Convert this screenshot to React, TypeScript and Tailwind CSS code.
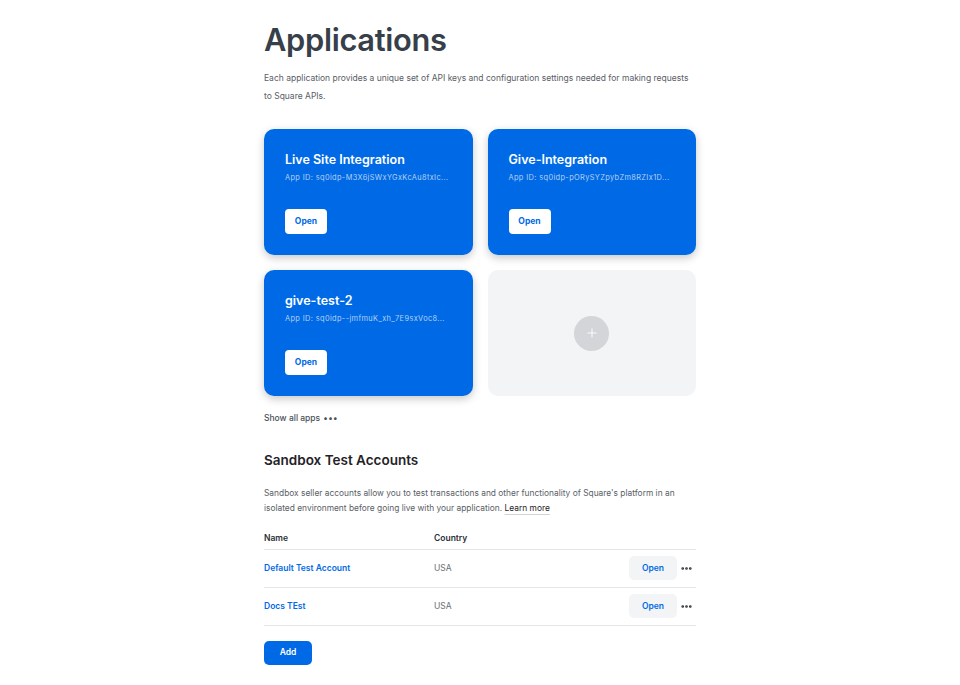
import { Plus, MoreHorizontal } from 'lucide-react';

type App = { name: string; appId: string };

const apps: App[] = [
  { name: 'Live Site Integration', appId: 'sq0idp-M3X6jSWxYGxKcAu8txIc...' },
  { name: 'Give-Integration', appId: 'sq0idp-pORySYZpybZm8RZIx1D...' },
  { name: 'give-test-2', appId: 'sq0idp--jmfmuK_xh_7E9sxVoc8...' },
];

const accounts = [
  { name: 'Default Test Account', country: 'USA' },
  { name: 'Docs TEst', country: 'USA' },
];

function AppCard({ app }: { app: App }) {
  return (
    <div className="flex h-[126px] flex-col rounded-[10px] bg-[#006ae6] px-[21px] pt-[22px] shadow-[0_3px_8px_rgba(0,0,0,0.22)]">
      <div className="text-[12.5px] font-semibold leading-[18px] text-white">{app.name}</div>
      <div className="mt-[3px] whitespace-nowrap text-[7.4px] leading-[12px] tracking-[0.05em] text-[#b3d0f5]">
        App ID: {app.appId}
      </div>
      <button
        type="button"
        className="mt-[25px] h-[25px] w-[42px] rounded-[4px] bg-white text-[8.5px] font-bold text-[#006ae6]"
      >
        Open
      </button>
    </div>
  );
}

function NewAppCard() {
  return (
    <div className="flex h-[126px] items-center justify-center rounded-[10px] bg-[#f3f4f6]">
      <div className="flex h-[35px] w-[35px] items-center justify-center rounded-full bg-[#d3d5d8]">
        <Plus className="h-[14px] w-[14px] text-white" strokeWidth={1.6} />
      </div>
    </div>
  );
}

export default function App() {
  return (
    <div className="min-h-screen bg-white font-['Inter',sans-serif] text-[#373f4a]">
      <div className="mx-auto w-[432px] pt-[18px]">
        <h1 className="text-[30.8px] font-semibold leading-[44px] tracking-[-0.01em] text-[#373f4a]">
          Applications
        </h1>
        <p className="mt-[7px] text-[8.5px] leading-[18px] text-[#5a6066]">
          Each application provides a unique set of API keys and configuration settings needed for making requests
          to Square APIs.
        </p>

        <div className="mt-[24px] grid grid-cols-2 gap-[15px]">
          {apps.map((app) => (
            <AppCard key={app.name} app={app} />
          ))}
          <NewAppCard />
        </div>

        <div className="mt-[16px] flex items-center gap-[3px] text-[8.5px] font-medium leading-[12px] text-[#4a5158]">
          Show all apps <span className="tracking-[0.05em]">•••</span>
        </div>

        <h2 className="mt-[27px] text-[13.5px] font-semibold leading-[18px] text-[#1f2328]">Sandbox Test Accounts</h2>
        <p className="mt-[17px] text-[8.4px] leading-[15px] text-[#5a6066]">
          Sandbox seller accounts allow you to test transactions and other functionality of Square's platform in an
          isolated environment before going live with your application.{' '}
          <a className="text-[#1f2328] underline decoration-[#d0d3d6] underline-offset-[3px]">Learn more</a>
        </p>

        <table className="mt-[16px] w-full text-left">
          <thead>
            <tr className="border-b border-[#e3e5e7]">
              <th className="h-[17px] w-[170px] pb-[4px] text-[8.5px] font-semibold text-[#2b3036]">Name</th>
              <th className="h-[17px] pb-[4px] text-[8.5px] font-semibold text-[#2b3036]">Country</th>
              <th className="h-[17px] pb-[4px]" />
            </tr>
          </thead>
          <tbody>
            {accounts.map((acc) => (
              <tr key={acc.name} className="border-b border-[#e3e5e7]">
                <td className="h-[38px] text-[8.5px] font-semibold text-[#006ae6]">{acc.name}</td>
                <td className="text-[8.5px] text-[#6a7076]">{acc.country}</td>
                <td>
                  <div className="flex items-center justify-end gap-[3px] pr-[3px]">
                    <button
                      type="button"
                      className="h-[24px] w-[48px] rounded-[5px] bg-[#f3f4f6] text-[8.5px] font-semibold text-[#006ae6]"
                    >
                      Open
                    </button>
                    <MoreHorizontal className="h-[13px] w-[13px] text-[#2b3036]" strokeWidth={3} />
                  </div>
                </td>
              </tr>
            ))}
          </tbody>
        </table>

        <button
          type="button"
          className="mt-[15px] h-[24px] w-[48px] rounded-[5px] bg-[#006ae6] text-[8.5px] font-semibold text-white"
        >
          Add
        </button>
      </div>
    </div>
  );
}
